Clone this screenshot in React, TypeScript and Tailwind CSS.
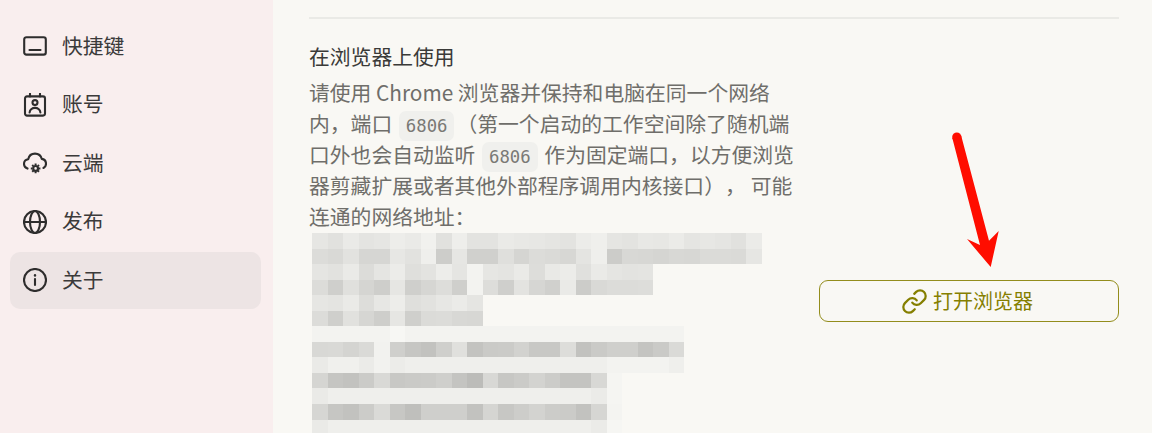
import { Link } from "lucide-react";

const MOSAIC: number[][] = [
  [0xe6,0xe1,0xea,0xe4,0xe6,0xed,0xea,0xf1,0xe1,0xee,0xe3,0xe3,0xea,0xe8,0xe7,0xe5,0xe3,0xec,0xef,0xe5,0xe3,0xe8,0xe7,0xeb,0xe5,0xe7,0xe5,0xe1,0xeb],
  [0xdc,0xd9,0xe2,0xd6,0xd6,0xe7,0xe2,0xef,0xcd,0xe6,0xd0,0xd0,0xdf,0xd5,0xdc,0xda,0xd7,0xe4,0xef,0xcc,0xd8,0xd7,0xd5,0xd8,0xd7,0xdb,0xdb,0xda,0xe6],
  [0xe5,0xe2,0xea,0xdc,0xe5,0xec,0xdf,0xe3,0xed,0xe5,0xf3,0xe6,0xe4,0xea,0xdd,0xe9,0xec,0xe0,0xea,0xe5,0xe3,0xe4],
  [0xdc,0xcf,0xe0,0xd5,0xce,0xe6,0xcf,0xd6,0xdd,0xcf,0xf3,0xdd,0xcf,0xe3,0xd6,0xd0,0xea,0xcc,0xd9,0xdc,0xdc,0xdd],
  [0xe6,0xe4,0xea,0xdd,0xe7,0xed,0xdf,0xe2,0xe7,0xeb,0xe5],
  [0xdc,0xcf,0xe1,0xd6,0xce,0xe6,0xcf,0xdb,0xdc,0xd8,0xd7],
  [0xf3,0xf3,0xf3,0xf3,0xf3,0xf7,0xf3,0xf3,0xf3,0xf3,0xf3,0xf3,0xf3,0xf3,0xf3,0xf3,0xf3,0xf3,0xf3,0xf3,0xf3,0xf3,0xf3,0xf3],
  [0xd8,0xd9,0xd4,0xda,0xf2,0xcf,0xc6,0xc2,0xcf,0xe0,0xc3,0xca,0xcb,0xd2,0xc8,0xc8,0xdd,0xc2,0xca,0xcf,0xcf,0xc4,0xca,0xda],
  [0xea,0xf0,0xf0,0xeb,0xf2,0xec,0xef,0xef,0xef,0xef,0xef,0xef,0xef,0xef,0xef,0xef,0xef,0xef,0xef,0xf3,0xf3,0xf3,0xf3,0xef],
  [0xd5,0xc5,0xc2,0xcb,0xd9,0xc8,0xca,0xcb,0xcf,0xc4,0xbc,0xd8,0xc7,0xcb,0xd3,0xcc,0xc4,0xc4,0xd8,0xf5],
  [0xea,0xef,0xef,0xef,0xef,0xef,0xef,0xef,0xef,0xef,0xef,0xef,0xef,0xef,0xef,0xef,0xef,0xef,0xeb,0xf5],
  [0xd6,0xc6,0xc2,0xcc,0xda,0xc7,0xbf,0xcf,0xcf,0xcf,0xc2,0xd5,0xc7,0xcd,0xd3,0xcc,0xcb,0xc2,0xd6,0xf4],
  [0xea,0xef,0xef,0xef,0xef,0xef,0xef,0xef,0xef,0xef,0xef,0xef,0xef,0xef,0xef,0xef,0xef,0xef,0xeb,0xf6],
];

function Ico({ children }: { children: React.ReactNode }) {
  return (
    <svg
      viewBox="0 0 24 24"
      fill="none"
      stroke="currentColor"
      strokeWidth={2.1}
      strokeLinecap="round"
      strokeLinejoin="round"
      className="w-6 h-6 shrink-0 text-[#2e2d2d]"
    >
      {children}
    </svg>
  );
}

const NAV = [
  {
    label: "快捷键",
    icon: (
      <Ico>
        <rect x="1.2" y="3.2" width="21.6" height="17.4" rx="2.2" />
        <path d="M6.5 16h11" />
      </Ico>
    ),
  },
  {
    label: "账号",
    icon: (
      <Ico>
        <rect x="2" y="3.4" width="20" height="19.2" rx="2" />
        <path d="M7 .8v2.6M17 .8v2.6" />
        <circle cx="12" cy="9.6" r="2.5" />
        <path d="M6.6 19.5c.5-6.2 10.3-6.2 10.8 0" />
      </Ico>
    ),
  },
  {
    label: "云端",
    icon: (
      <Ico>
        <path d="M4.5 17.6C2.4 16.8 1 15 1 12.9c0-2.4 1.8-4.4 4.2-4.7C5.9 4.9 8.7 2.6 12 2.6c3.2 0 6 2.1 6.8 5.3 2.4.4 4.2 2.4 4.2 4.9 0 1.8-1 3.4-2.5 4.2" />
        <circle cx="12.6" cy="17.4" r="2.4" strokeWidth={2.2} />
        <path
          d="M12.6 12.6v1.6M12.6 20.6v1.6M7.8 17.4h1.6M15.8 17.4h1.6M9.2 14l1.1 1.1M14.9 19.7l1.1 1.1M9.2 20.8l1.1-1.1M14.9 15.1l1.1-1.1"
          strokeWidth={2}
          strokeLinecap="butt"
        />
      </Ico>
    ),
  },
  {
    label: "发布",
    icon: (
      <Ico>
        <circle cx="12" cy="12" r="11" />
        <ellipse cx="12" cy="12" rx="5" ry="11" />
        <path d="M1 12h22" />
      </Ico>
    ),
  },
  {
    label: "关于",
    active: true,
    icon: (
      <Ico>
        <circle cx="12" cy="12" r="11" />
        <path d="M12 11v6" />
        <path d="M12 7.3v.2" strokeWidth={2.4} />
      </Ico>
    ),
  },
];

function Code({ children }: { children: React.ReactNode }) {
  return (
    <span className="bg-[#f0f0ed] rounded-[7px] mx-[2px] px-[7px] py-[5px] leading-none text-[#7a7975] text-[17.3px] font-['DejaVu_Sans_Mono',monospace]">
      {children}
    </span>
  );
}

export default function App() {
  return (
    <div className="relative w-[1152px] h-[433px] overflow-hidden flex bg-[#f9f8f4] font-['Noto_Sans_CJK_SC',sans-serif] text-[20.8px] leading-[31px] [text-spacing-trim:space-all]">
      <aside className="w-[273px] shrink-0 bg-[#f9eeee] pl-[10px] pr-[12px] pt-[17.5px] flex flex-col gap-[1.5px] text-[#3b3a3a]">
        {NAV.map((n) => (
          <div
            key={n.label}
            className={`h-[57px] rounded-[10px] flex items-center pl-[13px] gap-[15px] ${n.active ? "bg-[#ede4e4]" : ""}`}
          >
            {n.icon}
            <span className="-mt-[2px]">{n.label}</span>
          </div>
        ))}
      </aside>

      <main className="flex-1 pl-[36px] pr-[33px] pt-[17px]">
        <div className="h-[2px] bg-[#eaeae6]" />
        <div className="flex justify-between pt-[22px]">
          <div className="w-[500px]">
            <div className="text-[#3a3a38]">在浏览器上使用</div>
            <div className="mt-[5px] text-[#6f6e6a]">
              <div>请使用 Chrome 浏览器并保持和电脑在同一个网络</div>
              <div>
                内，端口 <Code>6806</Code>（第一个启动的工作空间除了随机端
              </div>
              <div>
                口外也会自动监听 <Code>6806</Code> 作为固定端口，以方便浏览
              </div>
              <div>
                器剪藏扩展或者其他外部程序调用内核接口），<span className="ml-[5px]">可能</span>
              </div>
              <div>连通的网络地址：</div>
            </div>
            <div className="ml-[3px] mt-[1px] flex flex-col">
              {MOSAIC.map((row, i) => (
                <div key={i} className="flex h-[15.55px]">
                  {row.map((v, j) => (
                    <div
                      key={j}
                      className="w-[15.5px] h-full shrink-0"
                      style={{ backgroundColor: `rgb(${v},${v},${v - 3})` }}
                    />
                  ))}
                </div>
              ))}
            </div>
          </div>
          <button className="mt-[239px] w-[300px] h-[42px] shrink-0 border border-[#938d1c] rounded-[9px] pr-[4px] flex items-center justify-center gap-[5px] text-[#857f00] text-[20px]">
            <Link className="w-[27px] h-[27px]" strokeWidth={2} />
            <span className="-mt-[2px]">打开浏览器</span>
          </button>
        </div>
      </main>

      <svg className="absolute left-0 top-0 w-[1152px] h-[433px] pointer-events-none" viewBox="0 0 1152 433">
        <polygon
          fill="#ff0d00"
          points="952.3,138 961.2,135.8 989,240.8 998.7,231 990.7,267 967,239 980,245"
        />
        <circle cx="956.8" cy="137" r="4.6" fill="#ff0d00" />
      </svg>
    </div>
  );
}
